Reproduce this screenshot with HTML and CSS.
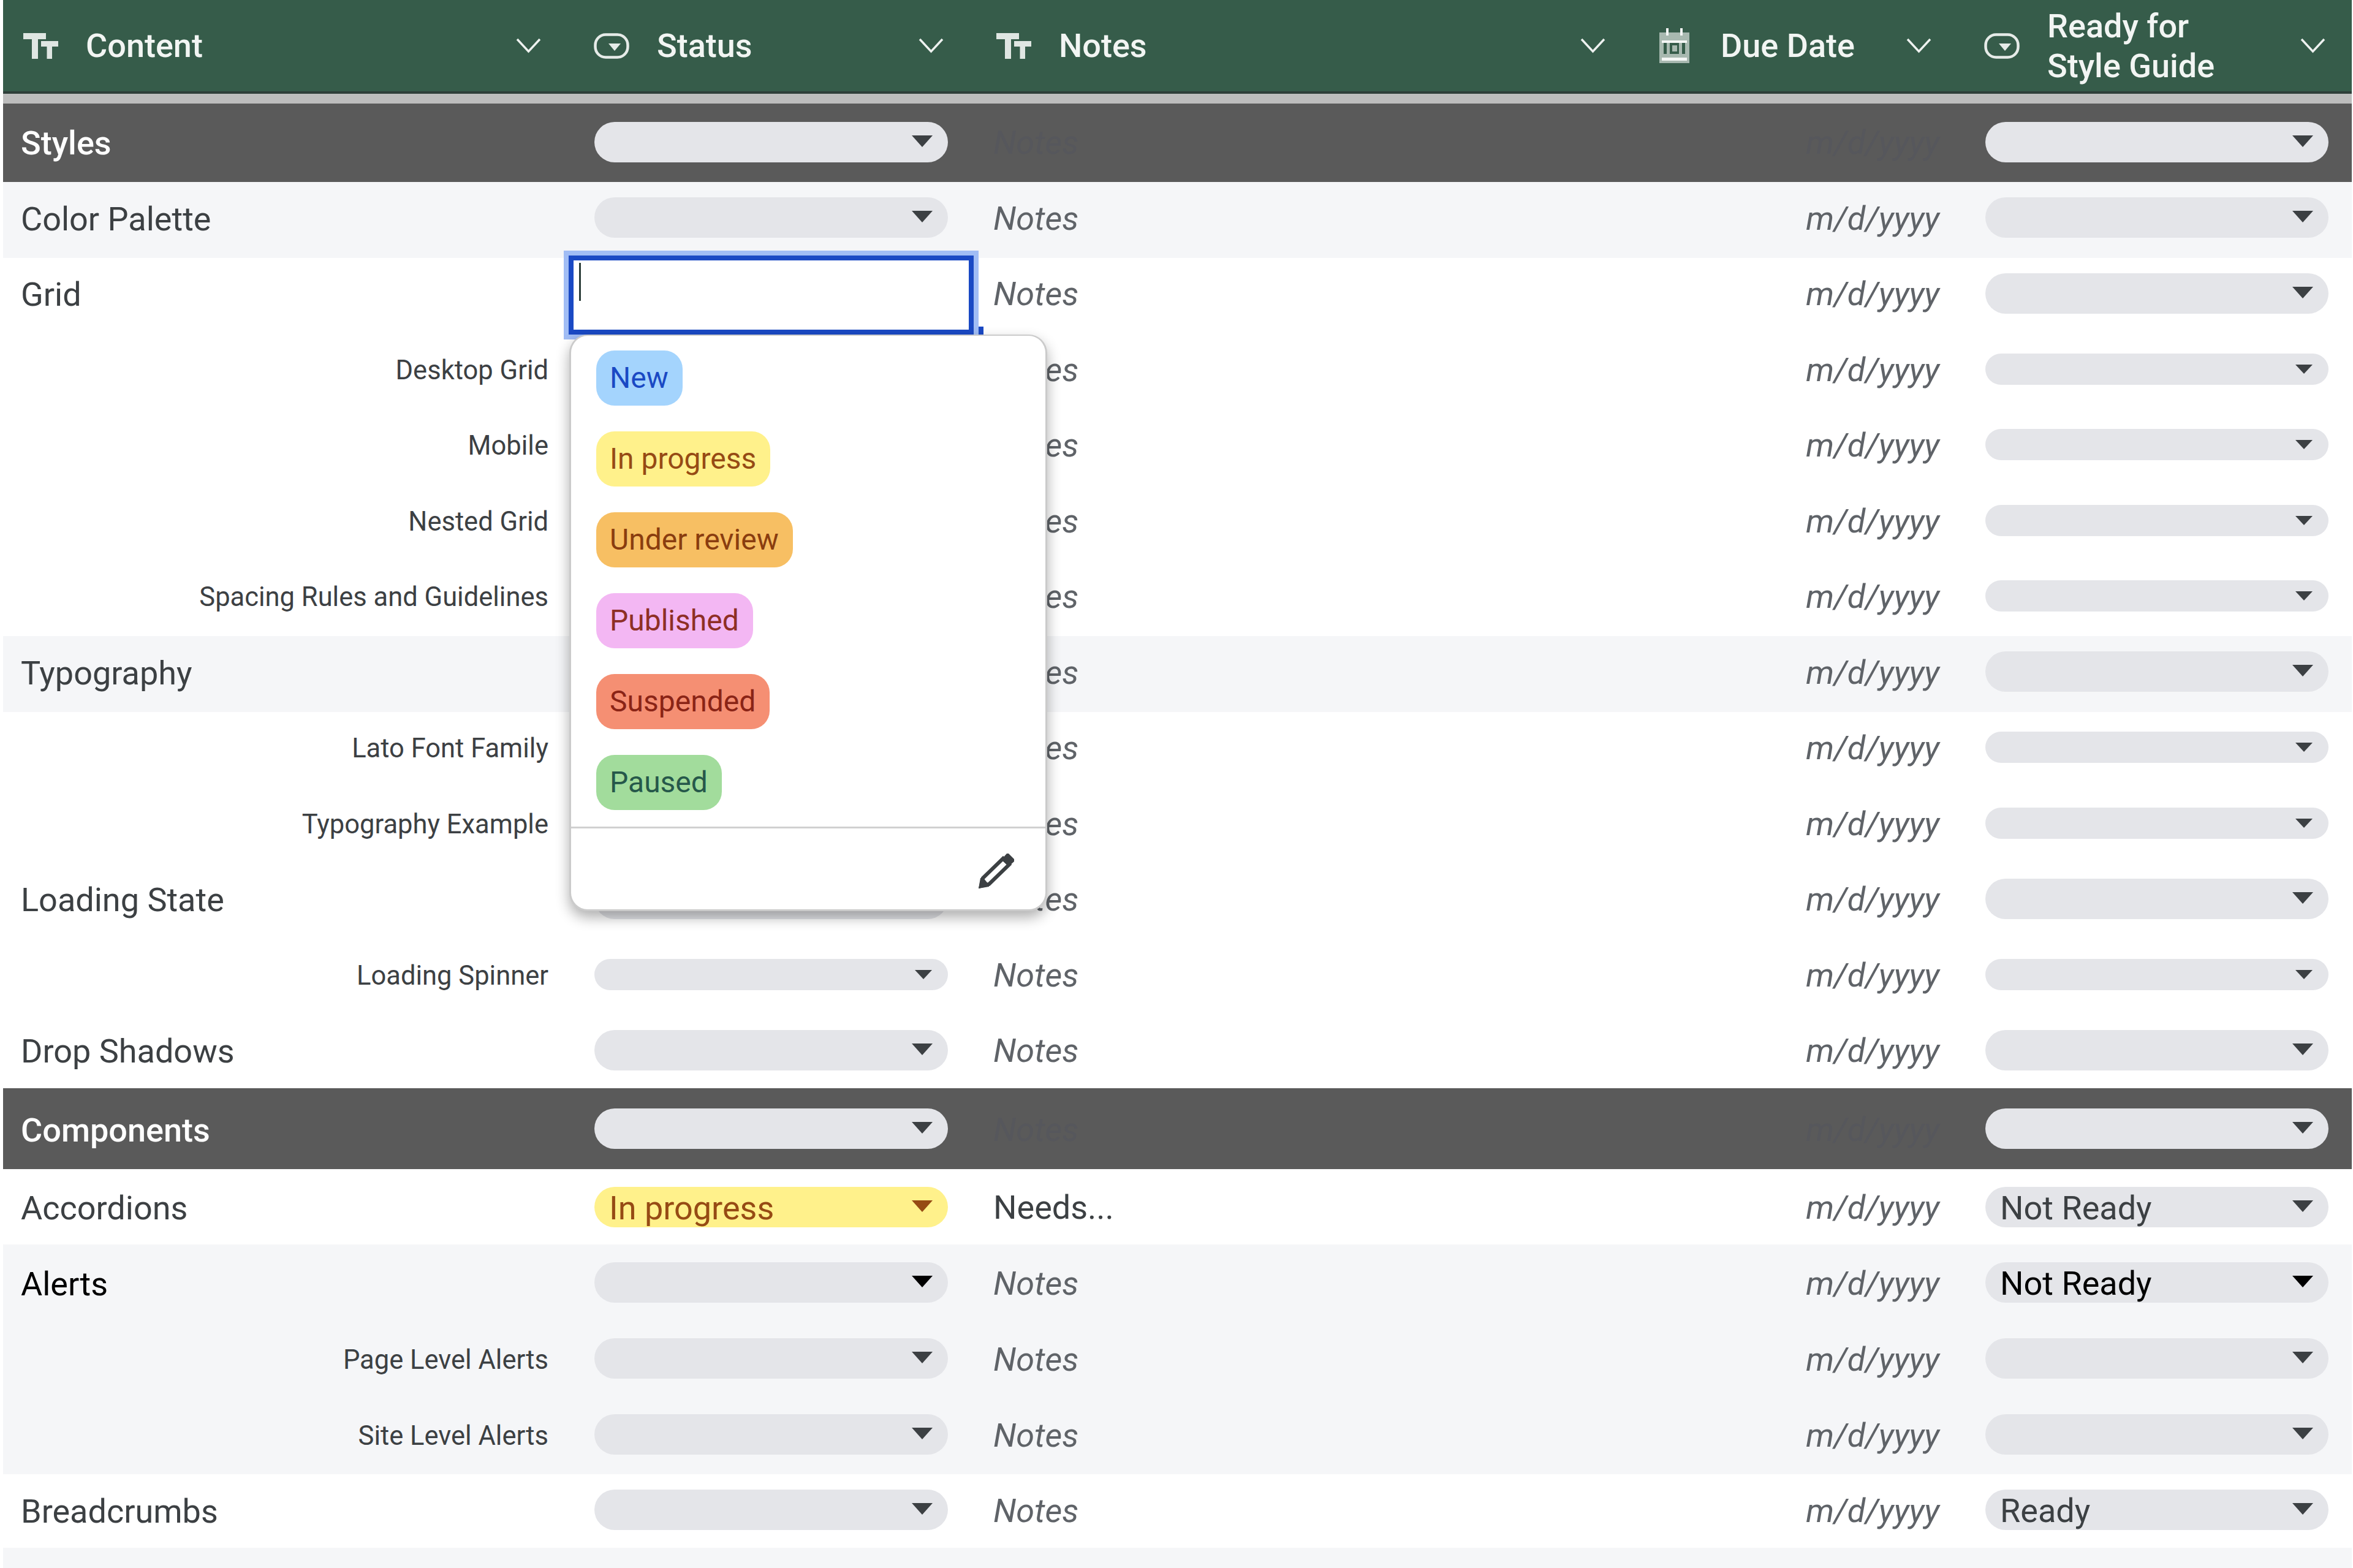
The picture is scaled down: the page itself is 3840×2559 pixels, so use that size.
FILE: index.html
```html
<!DOCTYPE html>
<html lang="en">
<head>
<meta charset="utf-8">
<title>Style Guide Tracker</title>
<link rel="stylesheet" href="styles.css">
</head>
<body>
<div class="sheet">
  <div class="row head">
    <div class="hcell c1">
      <svg class="ico ico-t" viewBox="0 0 57 42"><rect width="37" height="10"/><rect x="14" width="10" height="42"/><rect x="29" y="13" width="28" height="9"/><rect x="38.500" y="13" width="8.500" height="29"/></svg>
      <span class="hlabel">Content</span>
      <svg class="chev" viewBox="0 0 41 25"><path d="M2 2l18.500 20L39 2"/></svg>
    </div>
    <div class="hcell c2 hs">
      <svg class="ico ico-s" viewBox="0 0 58 42"><rect x="2.500" y="2.500" width="53" height="37" rx="17"/><path class="fill" d="M24 17h20l-10 12z"/></svg>
      <span class="hlabel">Status</span>
      <svg class="chev" viewBox="0 0 41 25"><path d="M2 2l18.500 20L39 2"/></svg>
    </div>
    <div class="hcell c3 hn">
      <svg class="ico ico-t" viewBox="0 0 57 42"><rect width="37" height="10"/><rect x="14" width="10" height="42"/><rect x="29" y="13" width="28" height="9"/><rect x="38.500" y="13" width="8.500" height="29"/></svg>
      <span class="hlabel">Notes</span>
      <svg class="chev" viewBox="0 0 41 25"><path d="M2 2l18.500 20L39 2"/></svg>
    </div>
    <div class="hcell c4 hd">
      <svg class="ico ico-c" viewBox="0 0 49 57"><path class="cal" fill-rule="evenodd" d="M0 7h49v50H0zM7 20v22h35V20z"/><rect class="calw" x="4" y="20" width="41" height="4"/><rect class="calw" x="11" y="0" width="4" height="12"/><rect class="calw" x="34" y="0" width="4" height="12"/><rect class="cal" x="12" y="24" width="5" height="18"/><rect class="cal" x="21" y="28" width="8" height="10"/><rect class="cal" x="32" y="24" width="5" height="18"/><rect class="calw" x="4" y="48" width="41" height="5"/></svg>
      <span class="hlabel">Due Date</span>
      <svg class="chev" viewBox="0 0 41 25"><path d="M2 2l18.500 20L39 2"/></svg>
    </div>
    <div class="hcell c5 hr">
      <svg class="ico ico-s" viewBox="0 0 58 42"><rect x="2.500" y="2.500" width="53" height="37" rx="17"/><path class="fill" d="M24 17h20l-10 12z"/></svg>
      <span class="hlabel">Ready for<br>Style Guide</span>
      <svg class="chev" viewBox="0 0 41 25"><path d="M2 2l18.500 20L39 2"/></svg>
    </div>
  </div>
  <div class="freeze"></div>

  <div class="row section r-styles">
    <div class="cell c1 name">Styles</div>
    <div class="cell c2"><div class="pill"></div></div>
    <div class="cell c3 note">Notes</div>
    <div class="cell c4 date">m/d/yyyy</div>
    <div class="cell c5"><div class="pill"></div></div>
  </div>
  <div class="row up alt">
    <div class="cell c1 name">Color Palette</div>
    <div class="cell c2"><div class="pill"></div></div>
    <div class="cell c3 note">Notes</div>
    <div class="cell c4 date">m/d/yyyy</div>
    <div class="cell c5"><div class="pill"></div></div>
  </div>
  <div class="row up">
    <div class="cell c1 name">Grid</div>
    <div class="cell c2 active">
      <div class="editor"><span class="caret"></span><span class="handle"></span></div>
      <div class="menu">
        <div class="options">
          <span class="chip ch-new">New</span>
          <span class="chip ch-prog">In progress</span>
          <span class="chip ch-rev">Under review</span>
          <span class="chip ch-pub">Published</span>
          <span class="chip ch-sus">Suspended</span>
          <span class="chip ch-pau">Paused</span>
        </div>
        <div class="menu-foot">
          <svg class="pencil" viewBox="0 0 58 57"><path class="pen-line" d="M4 53l3-13L40 8l10 10-33 32z"/><path class="pen-fill" d="M37 10l9-10h3l9 9v4l-9 8zM0 57l3-17 5 0 9 11 0 3z"/></svg>
        </div>
      </div>
    </div>
    <div class="cell c3 note">Notes</div>
    <div class="cell c4 date">m/d/yyyy</div>
    <div class="cell c5"><div class="pill"></div></div>
  </div>
  <div class="row up sub">
    <div class="cell c1 name">Desktop Grid</div>
    <div class="cell c2"><div class="pill"></div></div>
    <div class="cell c3 note">Notes</div>
    <div class="cell c4 date">m/d/yyyy</div>
    <div class="cell c5"><div class="pill"></div></div>
  </div>
  <div class="row up sub">
    <div class="cell c1 name">Mobile</div>
    <div class="cell c2"><div class="pill"></div></div>
    <div class="cell c3 note">Notes</div>
    <div class="cell c4 date">m/d/yyyy</div>
    <div class="cell c5"><div class="pill"></div></div>
  </div>
  <div class="row up sub">
    <div class="cell c1 name">Nested Grid</div>
    <div class="cell c2"><div class="pill"></div></div>
    <div class="cell c3 note">Notes</div>
    <div class="cell c4 date">m/d/yyyy</div>
    <div class="cell c5"><div class="pill"></div></div>
  </div>
  <div class="row up sub">
    <div class="cell c1 name">Spacing Rules and Guidelines</div>
    <div class="cell c2"><div class="pill"></div></div>
    <div class="cell c3 note">Notes</div>
    <div class="cell c4 date">m/d/yyyy</div>
    <div class="cell c5"><div class="pill"></div></div>
  </div>
  <div class="row up alt">
    <div class="cell c1 name">Typography</div>
    <div class="cell c2"><div class="pill"></div></div>
    <div class="cell c3 note">Notes</div>
    <div class="cell c4 date">m/d/yyyy</div>
    <div class="cell c5"><div class="pill"></div></div>
  </div>
  <div class="row up sub">
    <div class="cell c1 name">Lato Font Family</div>
    <div class="cell c2"><div class="pill"></div></div>
    <div class="cell c3 note">Notes</div>
    <div class="cell c4 date">m/d/yyyy</div>
    <div class="cell c5"><div class="pill"></div></div>
  </div>
  <div class="row up sub">
    <div class="cell c1 name">Typography Example</div>
    <div class="cell c2"><div class="pill"></div></div>
    <div class="cell c3 note">Notes</div>
    <div class="cell c4 date">m/d/yyyy</div>
    <div class="cell c5"><div class="pill"></div></div>
  </div>
  <div class="row up">
    <div class="cell c1 name">Loading State</div>
    <div class="cell c2"><div class="pill"></div></div>
    <div class="cell c3 note">Notes</div>
    <div class="cell c4 date">m/d/yyyy</div>
    <div class="cell c5"><div class="pill"></div></div>
  </div>
  <div class="row up sub">
    <div class="cell c1 name">Loading Spinner</div>
    <div class="cell c2"><div class="pill"></div></div>
    <div class="cell c3 note">Notes</div>
    <div class="cell c4 date">m/d/yyyy</div>
    <div class="cell c5"><div class="pill"></div></div>
  </div>
  <div class="row up last">
    <div class="cell c1 name">Drop Shadows</div>
    <div class="cell c2"><div class="pill"></div></div>
    <div class="cell c3 note">Notes</div>
    <div class="cell c4 date">m/d/yyyy</div>
    <div class="cell c5"><div class="pill"></div></div>
  </div>

  <div class="row section r-comp">
    <div class="cell c1 name">Components</div>
    <div class="cell c2"><div class="pill"></div></div>
    <div class="cell c3 note">Notes</div>
    <div class="cell c4 date">m/d/yyyy</div>
    <div class="cell c5"><div class="pill"></div></div>
  </div>
  <div class="row low first">
    <div class="cell c1 name">Accordions</div>
    <div class="cell c2"><div class="pill yellow">In progress</div></div>
    <div class="cell c3 filled">Needs...</div>
    <div class="cell c4 date">m/d/yyyy</div>
    <div class="cell c5"><div class="pill">Not Ready</div></div>
  </div>
  <div class="row low alt hover">
    <div class="cell c1 name">Alerts</div>
    <div class="cell c2"><div class="pill"></div></div>
    <div class="cell c3 note">Notes</div>
    <div class="cell c4 date">m/d/yyyy</div>
    <div class="cell c5"><div class="pill">Not Ready</div></div>
  </div>
  <div class="row low alt sub2">
    <div class="cell c1 name">Page Level Alerts</div>
    <div class="cell c2"><div class="pill"></div></div>
    <div class="cell c3 note">Notes</div>
    <div class="cell c4 date">m/d/yyyy</div>
    <div class="cell c5"><div class="pill"></div></div>
  </div>
  <div class="row low alt sub2 tall">
    <div class="cell c1 name">Site Level Alerts</div>
    <div class="cell c2"><div class="pill"></div></div>
    <div class="cell c3 note">Notes</div>
    <div class="cell c4 date">m/d/yyyy</div>
    <div class="cell c5"><div class="pill"></div></div>
  </div>
  <div class="row low short">
    <div class="cell c1 name">Breadcrumbs</div>
    <div class="cell c2"><div class="pill"></div></div>
    <div class="cell c3 note">Notes</div>
    <div class="cell c4 date">m/d/yyyy</div>
    <div class="cell c5"><div class="pill">Ready</div></div>
  </div>
  <div class="row tail alt"></div>
</div>
</body>
</html>
```

FILE: styles.css
```css
* { box-sizing: border-box; }
html, body { margin: 0; padding: 0; background: #fff; }
body { font-family: Roboto, "Liberation Sans", sans-serif; color: #3c4043; }
.sheet { width: 3840px; height: 2559px; padding: 0 2px 0 5px; overflow: hidden; display: flex; flex-direction: column; }

.row { display: grid; grid-template-columns: 923px 661px 1077px 532px 640px; flex: none; }
.c1 { grid-column: 1; }
.c2 { grid-column: 2; }
.c3 { grid-column: 3; }
.c4 { grid-column: 4; }
.c5 { grid-column: 5; }

/* header */
.head { height: 153px; background: #365c4a; border-bottom: 4px solid #2f3f3a; color: #fff; }
.freeze { height: 16px; background: #bdbdbd; flex: none; }
.hcell { display: flex; align-items: center; padding: 0 45px 0 33px; }
.hcell.hs { padding: 0 49px 0 41px; }
.hcell.hn { padding: 0 46px 0 37px; }
.hcell.hd { padding: 0 46px 0 42px; }
.hcell.hr { padding: 0 43px 0 40px; }
.hlabel { flex: 1; font-size: 54px; font-weight: 500; line-height: 65px; margin-left: 45px; color: #f2f5f3; }
.hs .hlabel, .hr .hlabel { margin-left: 45px; }
.hd .hlabel { margin-left: 51px; }
.ico { flex: none; display: block; }
.ico-t { width: 57px; height: 42px; fill: #dfe6e2; }
.ico-s { width: 58px; height: 42px; fill: none; stroke: #e6ebe8; stroke-width: 4.500; }
.ico-s .fill { fill: #e6ebe8; stroke: none; }
.ico-c { width: 49px; height: 57px; }
.cal { fill: #a8b9b0; }
.calw { fill: #f4f6f5; }
.chev { flex: none; width: 41px; height: 25px; fill: none; stroke: #eef2f0; stroke-width: 3.500; }

/* rows */
.cell { display: flex; align-items: center; min-width: 0; font-size: 54px; }
.up { height: 123.500px; padding-bottom: 7px; }
.up.last { height: 120.500px; padding-bottom: 4px; }
.section { height: 128px; background: #5a5a5a; padding-bottom: 3px; }
.r-comp { height: 132px; padding-bottom: 0; }
.low { height: 124px; }
.low.first { height: 123px; }
.low.tall { height: 127px; padding-bottom: 3px; }
.low.short { height: 120px; padding-bottom: 4px; }
.tail { height: 33px; }
.alt { background: #f5f6f8; }

.name { padding: 4px 0 0 29px; }
.section .name { color: #fff; font-weight: 500; }
.sub .name, .sub2 .name { justify-content: flex-end; padding: 4px 33px 0 0; font-size: 43.500px; }
.note { padding: 2px 0 0 32px; font-style: italic; color: #5f6368; }
.filled { padding: 2px 0 0 32px; }
.date { justify-content: flex-end; padding: 2px 33px 0 0; font-style: italic; color: #5f6368; }
.section .note, .section .date { color: #56575c; }

/* select pills */
.pill { position: relative; display: flex; align-items: center; width: 100%; height: 66px; margin: 0 42px; padding: 3px 0 0 24px; background: #e4e5e9; border-radius: 33px; color: #3c4043; }
.c5 .pill { margin: 0 38px 0 42px; }
.pill::after { content: ""; position: absolute; right: 25px; top: 22px; border-style: solid; border-width: 19px 17px 0; border-color: #3c4043 transparent transparent; }
.sub .pill { height: 51px; border-radius: 26px; }
.sub .pill::after { top: 18px; right: 26px; border-width: 15px 14px 0; }
.pill.yellow { background: #fff18b; color: #964b14; }
.pill.yellow::after { border-top-color: #964b14; }
.hover .name, .hover .c5 .pill { color: #000; }
.hover .pill::after { border-top-color: #000; }

/* active cell + dropdown */
.active { position: relative; }
.editor { position: absolute; left: 0; top: -4px; width: 661px; height: 129px; background: #fff; border: 8px solid #1a49c4; box-shadow: 0 0 0 8px #a1bdf5; z-index: 2; }
.caret { position: absolute; left: 9px; top: 4px; width: 3px; height: 62px; background: #2c3e3a; }
.handle { position: absolute; right: -24px; bottom: -8px; width: 8px; height: 13px; background: #1a49c4; }
.menu { position: absolute; left: 1px; top: 125px; width: 780px; height: 941px; background: #fff; border: 3px solid #cbcbcb; border-top-width: 2px; border-radius: 30px; box-shadow: 0 10px 22px rgba(0, 0, 0, .32); z-index: 3; display: flex; flex-direction: column; }
.options { flex: none; display: flex; flex-direction: column; align-items: flex-start; gap: 42px; height: 801px; padding: 24px 0 0 41px; }
.chip { display: flex; align-items: center; height: 90px; padding: 0 23px 0 22px; border-radius: 30px; font-size: 48px; }
.ch-new { background: #a4d4fd; color: #1a49c4; }
.ch-prog { background: #fff18b; color: #964b14; }
.ch-rev { background: #f7bf63; color: #8a3d0f; }
.ch-pub { background: #f3b7f3; color: #8e2f25; }
.ch-sus { background: #f58f73; color: #8a2416; }
.ch-pau { background: #a2dc9c; color: #26584a; }
.menu-foot { flex: 1; border-top: 3px solid #d0d0d0; display: flex; justify-content: flex-end; padding: 41px 51px 0 0; }
.pencil { width: 58px; height: 57px; display: block; }
.pen-line { fill: none; stroke: #3c4043; stroke-width: 6; }
.pen-fill { fill: #3c4043; }
```
